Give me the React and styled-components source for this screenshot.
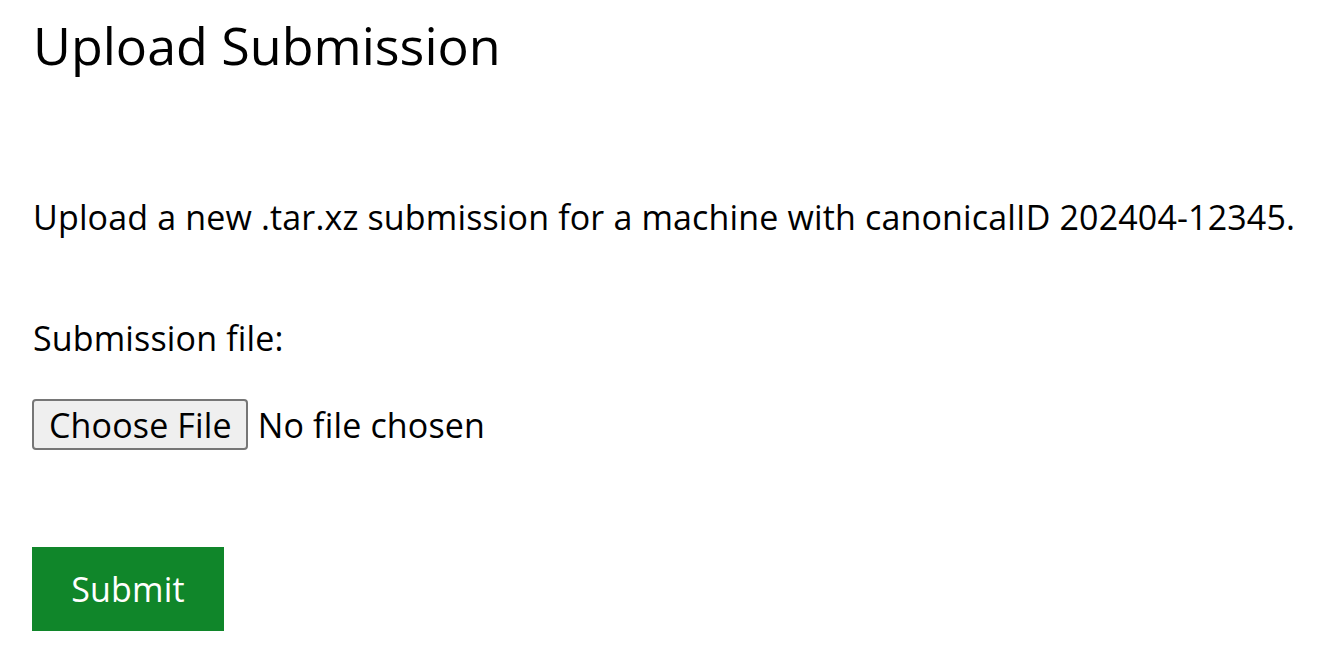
import React from 'react';
import styled, { createGlobalStyle } from 'styled-components';

const GlobalStyle = createGlobalStyle`
  html, body {
    margin: 0;
    padding: 0;
    background: #ffffff;
  }
  body {
    font-family: "Open Sans", "Noto Sans", sans-serif;
    color: #000000;
    letter-spacing: 0.15px;
  }
`;

const Page = styled.main`
  padding: 0 20px 0 33px;
`;

const Title = styled.h1`
  margin: 13px 0 0;
  font-size: 52px;
  font-weight: 400;
  line-height: 64px;
  letter-spacing: 0;
`;

const Intro = styled.p`
  margin: 118px 0 0;
  font-size: 34px;
  line-height: 44px;
  white-space: nowrap;
`;

const Form = styled.form`
  margin-top: 77px;
  display: flex;
  flex-direction: column;
  align-items: flex-start;
`;

const Label = styled.label`
  font-size: 34px;
  line-height: 44px;
`;

const FileRow = styled.div`
  margin-top: 39px;
  display: flex;
  align-items: center;
  gap: 10px;
  font-size: 34px;
`;

const ChooseButton = styled.label`
  display: inline-flex;
  align-items: center;
  height: 51px;
  margin-left: -1px;
  padding: 0 14px 0 15px;
  box-sizing: border-box;
  background: #efefef;
  border: 2px solid #767676;
  border-radius: 4px;
  font-size: 34px;
`;

const SubmitButton = styled.button`
  margin-top: 97px;
  margin-left: -1px;
  width: 192px;
  height: 84px;
  border: none;
  background: #10862a;
  color: #ffffff;
  font-family: inherit;
  font-size: 34px;
  letter-spacing: 0.15px;
`;

export default function App() {
  return (
    <>
      <GlobalStyle />
      <Page>
        <Title>Upload Submission</Title>
        <Intro>Upload a new .tar.xz submission for a machine with canonicalID 202404-12345.</Intro>
        <Form onSubmit={(e) => e.preventDefault()}>
          <Label htmlFor="file">Submission file:</Label>
          <FileRow>
            <ChooseButton htmlFor="file">Choose File</ChooseButton>
            <span>No file chosen</span>
          </FileRow>
          <SubmitButton type="submit">Submit</SubmitButton>
        </Form>
      </Page>
    </>
  );
}
